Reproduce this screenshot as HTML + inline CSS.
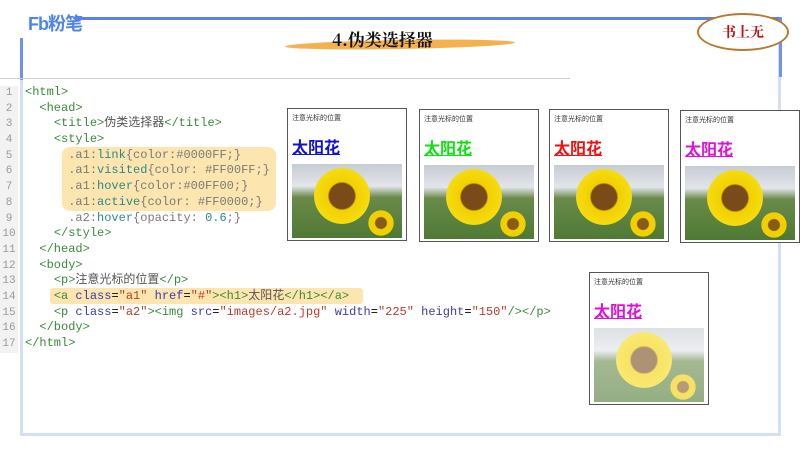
<!DOCTYPE html>
<html><head><meta charset="utf-8">
<style>
*{margin:0;padding:0;box-sizing:border-box}
body{width:800px;height:450px;background:#fff;position:relative;overflow:hidden;font-family:"Liberation Sans","Noto Sans CJK SC",sans-serif}
.abs{position:absolute}
.code{position:absolute;left:0;top:85px;width:570px;font-family:"Liberation Mono","Noto Sans CJK SC",monospace;font-size:12px}
.ln{height:15.7px;line-height:15.7px;white-space:pre;position:relative}
.ln i{font-style:normal;display:inline-block;width:18px;text-align:center;color:#999;background:#f2f2f2;margin-right:7px;font-size:11px}
.g{color:#3a8a3a}.k{color:#7a7a7a}.b{color:#3b3bb0}.r{color:#c0392b}.t{color:#555}.c{color:#2a8a8a}
.panel{position:absolute;width:120px;height:133px;border:1.5px solid #555;background:#fff}
.panel .p{position:absolute;left:4px;top:4px;font-size:7px;color:#333}
.panel .h{position:absolute;left:4px;top:25px;font-size:16px;font-weight:bold;text-decoration:underline}
.img{position:absolute;left:4px;top:55px;width:110px;height:74px;overflow:hidden;background:linear-gradient(#c7ccd3 0%,#e2e5ea 30%,#6a8a4a 45%,#4e7a34 100%)}
.img .f{position:absolute;left:22px;top:4px;width:56px;height:56px;border-radius:50%;background:radial-gradient(circle,#7a4a18 0 32%,#f2d000 36%,#f5dc10 70%,rgba(245,220,16,0) 72%)}
.img .f2{position:absolute;left:76px;top:46px;width:26px;height:26px;border-radius:50%;background:radial-gradient(circle,#8a5a18 0 30%,#f0d000 35%,#f0d000 68%,rgba(0,0,0,0) 70%)}
</style></head><body>
<div class="abs" style="left:20px;top:38px;width:761px;height:398px;border:3px solid #d3defa;border-top:none"></div>
<div class="abs" style="left:20px;top:38px;width:3px;height:42px;background:#6f92ec"></div>
<div class="abs" style="left:75px;top:17px;width:707px;height:3px;background:#5b82e8"></div>
<div class="abs" style="left:779px;top:17px;width:3px;height:60px;background:#6f92ec"></div>
<div class="abs" style="left:28px;top:10px;font-size:18px;font-weight:bold;color:#4f84e8;letter-spacing:-1px">Fb粉笔</div>
<div class="abs" style="left:285px;top:40px;width:230px;height:9px;background:#f4a93a;border-radius:50%;transform:rotate(-1deg);opacity:.9"></div>
<div class="abs" style="left:332px;top:26px;font-size:17px;color:#111;font-family:'Noto Serif CJK SC',serif;font-weight:bold">4.伪类选择器</div>
<div class="abs" style="left:697px;top:13px;width:92px;height:38px;border:2px solid #b57a2a;border-radius:50%;background:#fff;text-align:center;line-height:34px;font-size:14px;font-weight:bold;color:#c01010;font-family:'Noto Serif CJK SC',serif">书上无</div>
<div class="abs" style="left:0;top:78px;width:570px;height:1px;background:#ccc"></div>
<div class="abs" style="left:62px;top:147px;width:214px;height:64px;background:#fde5b0;border-radius:8px"></div>
<div class="abs" style="left:50px;top:288px;width:313px;height:16px;background:#fde5b0;border-radius:3px"></div>
<div class="code">
<div class="ln"><i>1</i><span class="g">&lt;html&gt;</span></div>
<div class="ln"><i>2</i>  <span class="g">&lt;head&gt;</span></div>
<div class="ln"><i>3</i>    <span class="g">&lt;title&gt;</span><span class="t">伪类选择器</span><span class="g">&lt;/title&gt;</span></div>
<div class="ln"><i>4</i>    <span class="g">&lt;style&gt;</span></div>
<div class="ln"><i>5</i>      <span class="k">.a1:</span><span class="c">link</span><span class="k">{color:#0000FF;}</span></div>
<div class="ln"><i>6</i>      <span class="k">.a1:</span><span class="c">visited</span><span class="k">{color: #FF00FF;}</span></div>
<div class="ln"><i>7</i>      <span class="k">.a1:</span><span class="c">hover</span><span class="k">{color:#00FF00;}</span></div>
<div class="ln"><i>8</i>      <span class="k">.a1:</span><span class="c">active</span><span class="k">{color: #FF0000;}</span></div>
<div class="ln"><i>9</i>      <span class="k">.a2:</span><span class="c">hover</span><span class="k">{opacity: </span><span class="c">0.6</span><span class="k">;}</span></div>
<div class="ln"><i>10</i>    <span class="g">&lt;/style&gt;</span></div>
<div class="ln"><i>11</i>  <span class="g">&lt;/head&gt;</span></div>
<div class="ln"><i>12</i>  <span class="g">&lt;body&gt;</span></div>
<div class="ln"><i>13</i>    <span class="g">&lt;p&gt;</span><span class="t">注意光标的位置</span><span class="g">&lt;/p&gt;</span></div>
<div class="ln"><i>14</i>    <span class="g">&lt;a </span><span class="b">class</span>=<span class="r">"a1"</span> <span class="b">href</span>=<span class="r">"#"</span><span class="g">&gt;&lt;h1&gt;</span><span class="t">太阳花</span><span class="g">&lt;/h1&gt;&lt;/a&gt;</span></div>
<div class="ln"><i>15</i>    <span class="g">&lt;p </span><span class="b">class</span>=<span class="r">"a2"</span><span class="g">&gt;&lt;img </span><span class="b">src</span>=<span class="r">"images/a2.jpg"</span> <span class="b">width</span>=<span class="r">"225"</span> <span class="b">height</span>=<span class="r">"150"</span><span class="g">/&gt;&lt;/p&gt;</span></div>
<div class="ln"><i>16</i>  <span class="g">&lt;/body&gt;</span></div>
<div class="ln"><i>17</i><span class="g">&lt;/html&gt;</span></div>
</div>
<div class="panel" style="left:287px;top:108px"><div class="p">注意光标的位置</div><div class="h" style="color:#1010d0">太阳花</div><div class="img"><div class="f"></div><div class="f2"></div></div></div>
<div class="panel" style="left:419px;top:109px"><div class="p">注意光标的位置</div><div class="h" style="color:#10e010">太阳花</div><div class="img"><div class="f"></div><div class="f2"></div></div></div>
<div class="panel" style="left:549px;top:109px"><div class="p">注意光标的位置</div><div class="h" style="color:#f01010">太阳花</div><div class="img"><div class="f"></div><div class="f2"></div></div></div>
<div class="panel" style="left:680px;top:110px"><div class="p">注意光标的位置</div><div class="h" style="color:#e010d8">太阳花</div><div class="img"><div class="f"></div><div class="f2"></div></div></div>
<div class="panel" style="left:589px;top:272px"><div class="p">注意光标的位置</div><div class="h" style="color:#e010d8">太阳花</div><div class="img" style="opacity:.6"><div class="f"></div><div class="f2"></div></div></div>
</body></html>
